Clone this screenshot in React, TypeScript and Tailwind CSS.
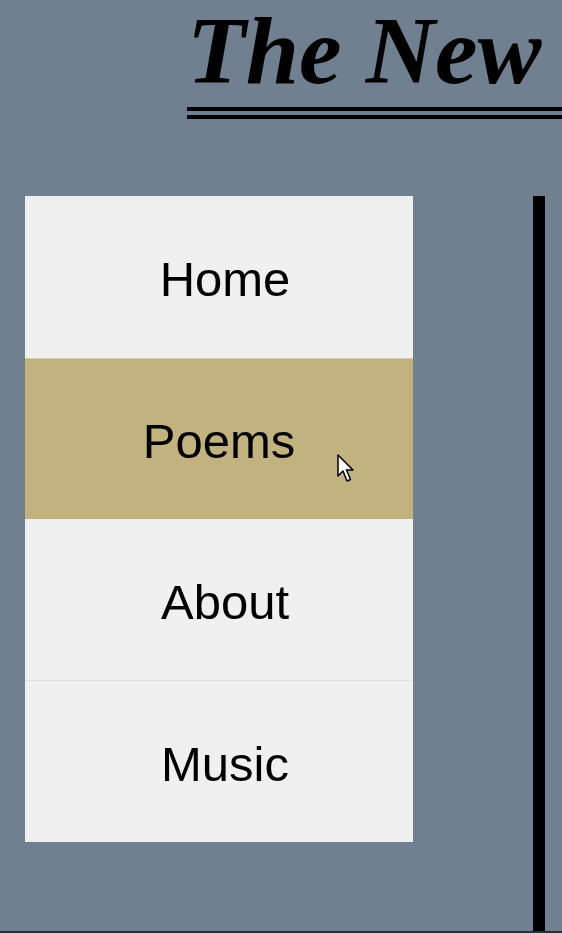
import React from "react"

const items = ["Home", "Poems", "About", "Music"]

function Cursor() {
  return (
    <svg className="absolute left-[337px] top-[454px]" width="20" height="30" viewBox="0 0 20 30">
      <path d="M1 1 L1 22 L6 17 L10 27 L13.5 25.5 L9.5 16 L16 16 Z" fill="#fff" stroke="#000" strokeWidth="1.5" strokeLinejoin="round" />
    </svg>
  )
}

export default function App() {
  return (
    <div className="relative h-[933px] w-full overflow-hidden bg-[#708090] flex flex-col border-b-2 border-[#2d2f33]">
      <header className="pl-[187px] pt-[3px] whitespace-nowrap">
        <h1 className="font-['Liberation_Serif',serif] italic font-bold text-[96px] leading-none text-black pb-[8px] border-b-[12px] border-double border-black">
          The New Poems
        </h1>
      </header>

      <div className="flex flex-1 mt-[77px]">
        <nav className="ml-[25px] w-[388px] self-start flex flex-col bg-[#f0f0f0] font-['Liberation_Sans',Arial,sans-serif] text-[49px] text-black">
          {items.map((item, i) => (
            <a
              key={item}
              className={
                "h-[161.5px] flex items-center justify-center pt-[6px] " +
                (item === "Poems" ? "bg-[#c2b280] border-t border-[#d9cfa6]" : "pl-[12px]") +
                (i === 2 ? " border-b border-[#e2e2e2]" : "")
              }
            >
              {item}
            </a>
          ))}
        </nav>
        <main className="ml-[120px] flex-1 border-l-[12px] border-black" />
      </div>

      <Cursor />
    </div>
  )
}
